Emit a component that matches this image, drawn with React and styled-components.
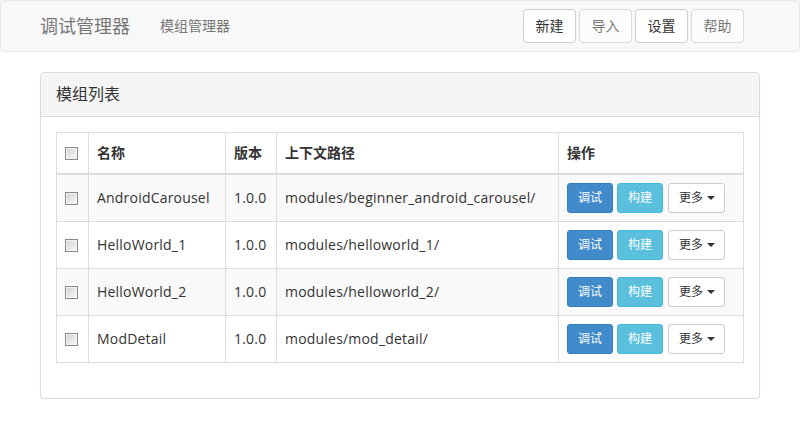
import React from 'react';
import styled, { createGlobalStyle, css } from 'styled-components';

const Global = createGlobalStyle`
  *, *::before, *::after { box-sizing: border-box; }
  html, body { margin: 0; padding: 0; background: #fff; }
  body {
    font-family: "Open Sans", "Noto Sans CJK SC", sans-serif;
    font-size: 14px;
    line-height: 1.42857;
    color: #333;
  }
`;

const Navbar = styled.nav`
  display: flex;
  align-items: center;
  height: 52px;
  padding: 0 55px 0 39px;
  background: #f8f8f8;
  border: 1px solid #e7e7e7;
  border-radius: 4px;
`;

const Brand = styled.a`
  font-size: 18px;
  line-height: 20px;
  color: #777;
  text-decoration: none;
  margin-right: 30px;
`;

const NavLink = styled.a`
  font-size: 14px;
  line-height: 20px;
  color: #777;
  text-decoration: none;
`;

const NavButtons = styled.div`
  margin-left: auto;
  display: flex;
  gap: 3px;
`;

const NavButton = styled.button`
  height: 34px;
  padding: 6px 11.5px;
  font-family: inherit;
  font-size: 14px;
  line-height: 20px;
  color: #333;
  background: #fff;
  border: 1px solid #ccc;
  border-radius: 4px;
  ${(p) => p.disabled && css`opacity: 0.65;`}
`;

const Panel = styled.section`
  margin: 20px 0 0 40px;
  width: 720px;
  background: #fff;
  border: 1px solid #ddd;
  border-radius: 4px;
  box-shadow: 0 1px 1px rgba(0, 0, 0, 0.05);
`;

const PanelHeading = styled.div`
  padding: 10px 15px;
  background: #f5f5f5;
  border-bottom: 1px solid #ddd;
  border-radius: 3px 3px 0 0;
  font-size: 16px;
  line-height: 23px;
  color: #333;
`;

const PanelBody = styled.div`
  padding: 15px;
`;

const Table = styled.table`
  width: 100%;
  table-layout: fixed;
  border-collapse: separate;
  border-spacing: 0;
  border-top: 1px solid #ddd;
  border-left: 1px solid #ddd;
  margin-bottom: 20px;
`;

const Th = styled.th`
  width: ${(p) => p.$w}px;
  padding: 8px;
  line-height: 24px;
  text-align: left;
  font-weight: bold;
  vertical-align: middle;
  border-right: 1px solid #ddd;
  border-bottom: 2px solid #ddd;
`;

const Row = styled.tr`
  background: ${(p) => (p.$striped ? '#f9f9f9' : '#fff')};
`;

const Td = styled.td`
  padding: 8px;
  line-height: 20px;
  letter-spacing: 0.2px;
  vertical-align: middle;
  white-space: nowrap;
  border-right: 1px solid #ddd;
  border-bottom: 1px solid #ddd;
`;

const Check = styled.input.attrs({ type: 'checkbox' })`
  appearance: none;
  display: block;
  width: 13px;
  height: 13px;
  margin: 0;
  border: 1px solid #8a8a8a;
  background: linear-gradient(135deg, #cfcfcf 0%, #e8e8e8 55%, #f8f8f8 100%);
  box-shadow: inset 0 0 0 1px #f4f4f4;
`;

const Actions = styled.div`
  display: flex;
  align-items: center;
  gap: 4px;
`;

const variants = {
  primary: css`background: #428bca; border-color: #357ebd; color: #fff;`,
  info: css`background: #5bc0de; border-color: #46b8da; color: #fff;`,
  default: css`background: #fff; border-color: #ccc; color: #333;`,
};

const SmallButton = styled.button`
  display: inline-flex;
  align-items: center;
  height: 30px;
  padding: 5px 10px;
  font-family: inherit;
  font-size: 12px;
  line-height: 18px;
  letter-spacing: 0;
  border: 1px solid;
  border-radius: 3px;
  ${(p) => variants[p.$variant || 'default']}
`;

const DropButton = styled(SmallButton)`
  margin-left: 1px;
  padding: 5px 9px 5px 10px;
`;

const Caret = styled.span`
  display: inline-block;
  width: 0;
  height: 0;
  margin-left: 4px;
  border-top: 4px solid #333;
  border-left: 4px solid transparent;
  border-right: 4px solid transparent;
`;

const modules = [
  { name: 'AndroidCarousel', version: '1.0.0', path: 'modules/beginner_android_carousel/' },
  { name: 'HelloWorld_1', version: '1.0.0', path: 'modules/helloworld_1/' },
  { name: 'HelloWorld_2', version: '1.0.0', path: 'modules/helloworld_2/' },
  { name: 'ModDetail', version: '1.0.0', path: 'modules/mod_detail/' },
];

export default function App() {
  return (
    <>
      <Global />
      <Navbar>
        <Brand>调试管理器</Brand>
        <NavLink>模组管理器</NavLink>
        <NavButtons>
          <NavButton>新建</NavButton>
          <NavButton disabled>导入</NavButton>
          <NavButton>设置</NavButton>
          <NavButton disabled>帮助</NavButton>
        </NavButtons>
      </Navbar>
      <Panel>
        <PanelHeading>模组列表</PanelHeading>
        <PanelBody>
          <Table>
            <thead>
              <tr>
                <Th $w={32}><Check /></Th>
                <Th $w={137}>名称</Th>
                <Th $w={51}>版本</Th>
                <Th $w={282}>上下文路径</Th>
                <Th $w={185}>操作</Th>
              </tr>
            </thead>
            <tbody>
              {modules.map((m, i) => (
                <Row key={m.name} $striped={i % 2 === 0}>
                  <Td><Check /></Td>
                  <Td>{m.name}</Td>
                  <Td>{m.version}</Td>
                  <Td>{m.path}</Td>
                  <Td>
                    <Actions>
                      <SmallButton $variant="primary">调试</SmallButton>
                      <SmallButton $variant="info">构建</SmallButton>
                      <DropButton>更多<Caret /></DropButton>
                    </Actions>
                  </Td>
                </Row>
              ))}
            </tbody>
          </Table>
        </PanelBody>
      </Panel>
    </>
  );
}
